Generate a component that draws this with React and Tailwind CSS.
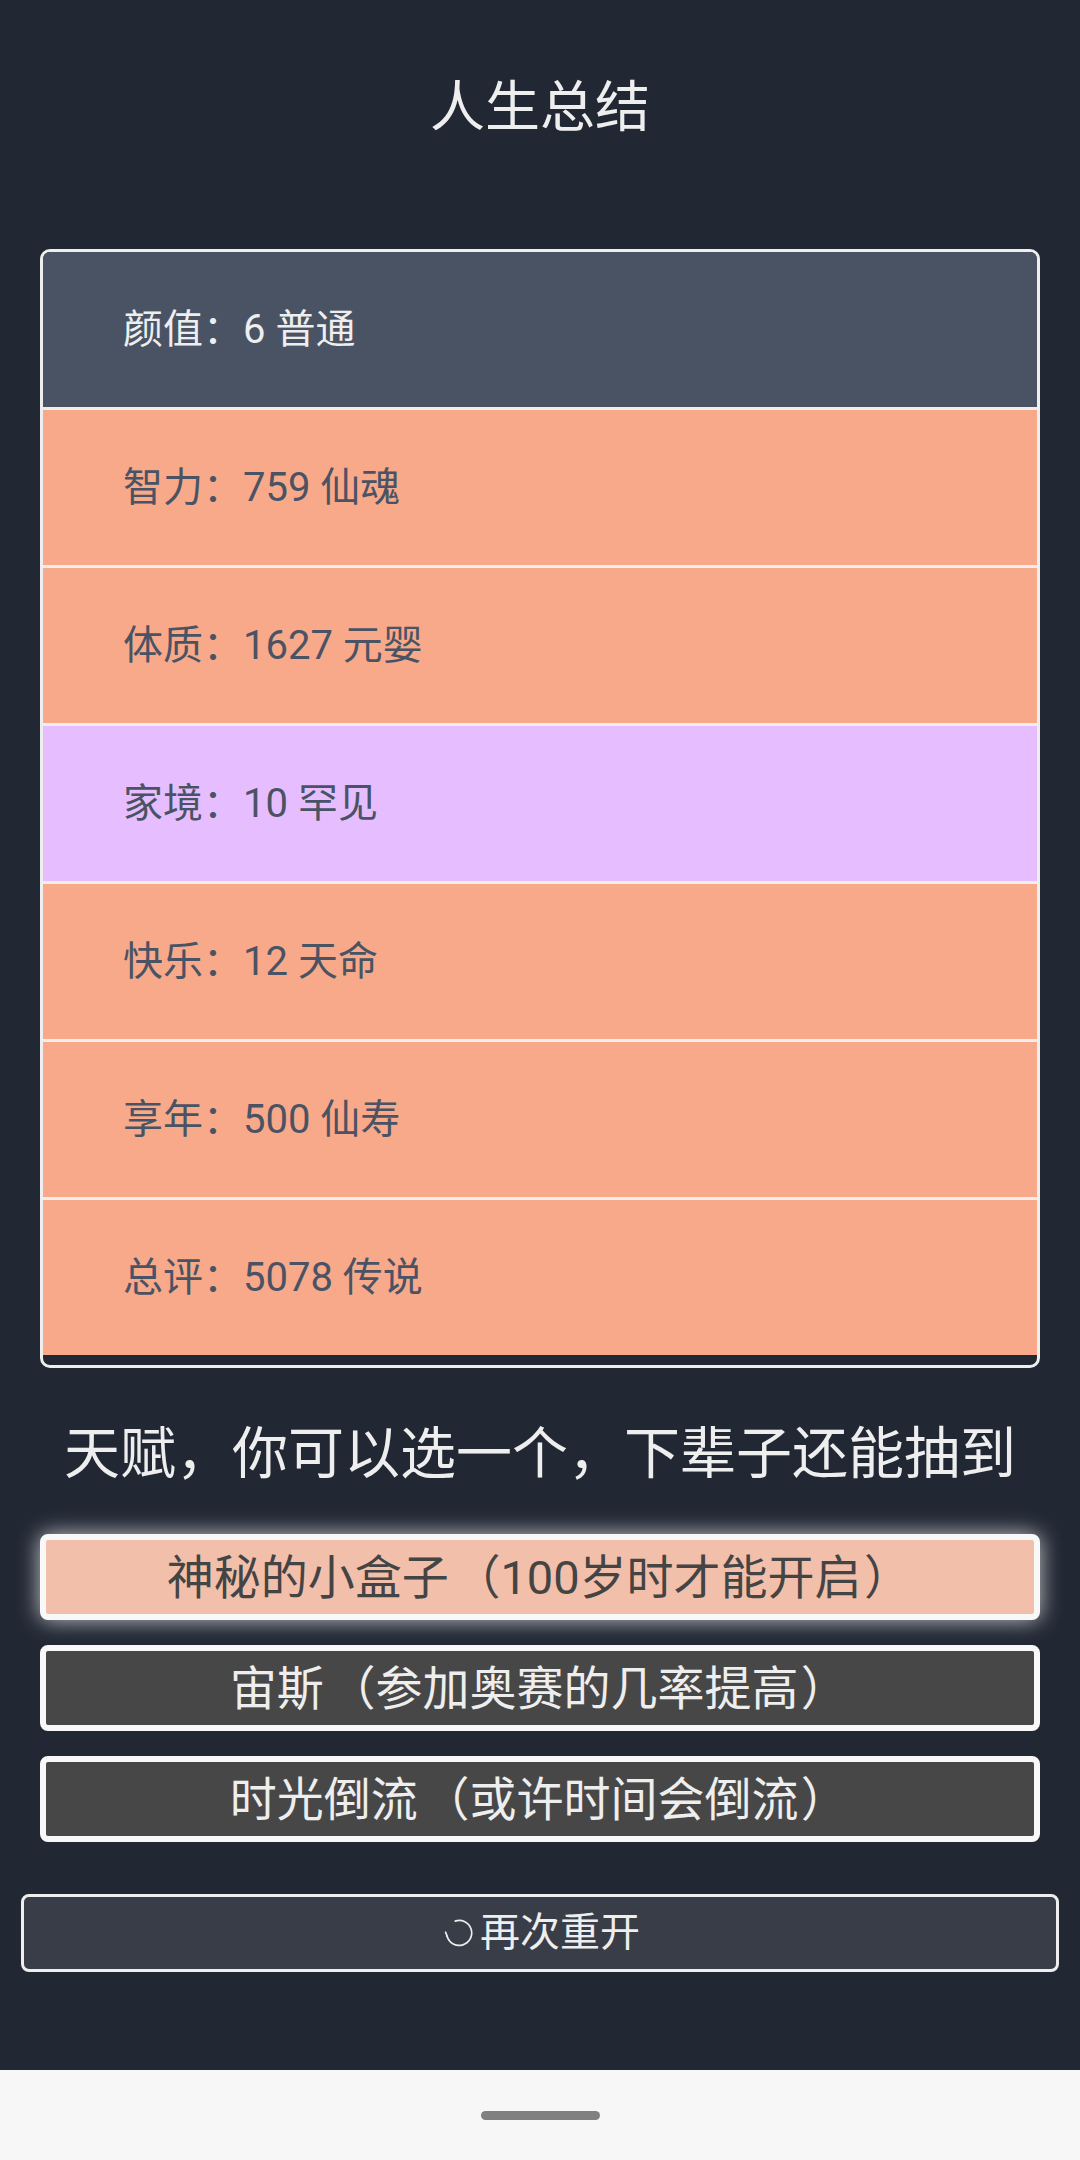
import React from "react";

const rows = [
  { label: "颜值：6 普通", bg: "bg-[#4a5364]", fg: "text-[#eeeeee]" },
  { label: "智力：759 仙魂", bg: "bg-[#f7a98a]", fg: "text-[#4a5364]" },
  { label: "体质：1627 元婴", bg: "bg-[#f7a98a]", fg: "text-[#4a5364]" },
  { label: "家境：10 罕见", bg: "bg-[#e6beff]", fg: "text-[#4a5364]" },
  { label: "快乐：12 天命", bg: "bg-[#f7a98a]", fg: "text-[#4a5364]" },
  { label: "享年：500 仙寿", bg: "bg-[#f7a98a]", fg: "text-[#4a5364]" },
  { label: "总评：5078 传说", bg: "bg-[#f7a98a]", fg: "text-[#4a5364]" },
];

const talents = [
  { name: "神秘的小盒子", desc: "100岁时才能开启", selected: true },
  { name: "宙斯", desc: "参加奥赛的几率提高", selected: false },
  { name: "时光倒流", desc: "或许时间会倒流", selected: false },
];

function RestartIcon() {
  return (
    <svg width="30" height="30" viewBox="0 0 30 30" fill="none" stroke="#eeeeee" strokeWidth="1.7" strokeLinecap="round" strokeLinejoin="round">
      <path d="M11.2 3.1 A12.5 12.5 0 1 1 3.2 18.4" />
      <path d="M3.2 18.4 L1.6 14.2" />
    </svg>
  );
}

export default function App() {
  return (
    <div
      className="w-[1080px] h-[2160px] bg-[#212733] flex flex-col"
      style={{ fontFamily: 'Roboto, "Noto Sans CJK SC", "Noto Sans", sans-serif' }}
    >
      <div className="h-[214px] flex items-center justify-center text-[55px] leading-none text-[#eeeeee]">
        人生总结
      </div>

      <div className="mt-[35px] mx-[40px] border-[3px] border-[#eeeeee] rounded-[10px] overflow-hidden pb-[10px]">
        {rows.map((r, i) => (
          <div
            key={i}
            className={`${r.bg} ${r.fg} flex items-center pl-[80px] text-[40px] leading-none ${
              i < rows.length - 1 ? "h-[158px] border-b-[3px] border-[#eeeeee]" : "h-[155px]"
            }`}
          >
            {r.label}
          </div>
        ))}
      </div>

      <div className="mt-[6px] h-[160px] flex items-center justify-center text-[56px] leading-none text-[#eeeeee]">
        天赋，你可以选一个，下辈子还能抽到
      </div>

      <div className="mx-[40px] flex flex-col gap-[25px]">
        {talents.map((t, i) => (
          <div
            key={i}
            className={`h-[86px] border-[6px] border-[#f8f8f8] rounded-[8px] flex items-center justify-center text-[47px] leading-none whitespace-nowrap ${
              t.selected
                ? "bg-[#f2bfab] text-[#444444] shadow-[0_0_22px_rgba(255,255,255,0.75)]"
                : "bg-[#474747] text-[#eeeeee]"
            }`}
          >
            <span>{t.name}</span>
            <span className="inline-block w-[1.1em] text-right">（</span>
            <span>{t.desc}</span>
            <span className="inline-block w-[1.1em] text-center">）</span>
          </div>
        ))}
      </div>

      <div className="mt-[52px] mx-[21px] h-[78px] border-[3px] border-[#eeeeee] rounded-[8px] bg-[#393d47] text-[#eeeeee] flex items-center justify-center gap-[6px] pl-[4px] text-[40px] leading-none">
        <RestartIcon />
        <span>再次重开</span>
      </div>

      <div className="flex-1" />

      <div className="h-[90px] bg-[#f7f7f7] flex items-center justify-center">
        <div className="w-[119px] h-[9px] rounded-full bg-[#808080]" />
      </div>
    </div>
  );
}
